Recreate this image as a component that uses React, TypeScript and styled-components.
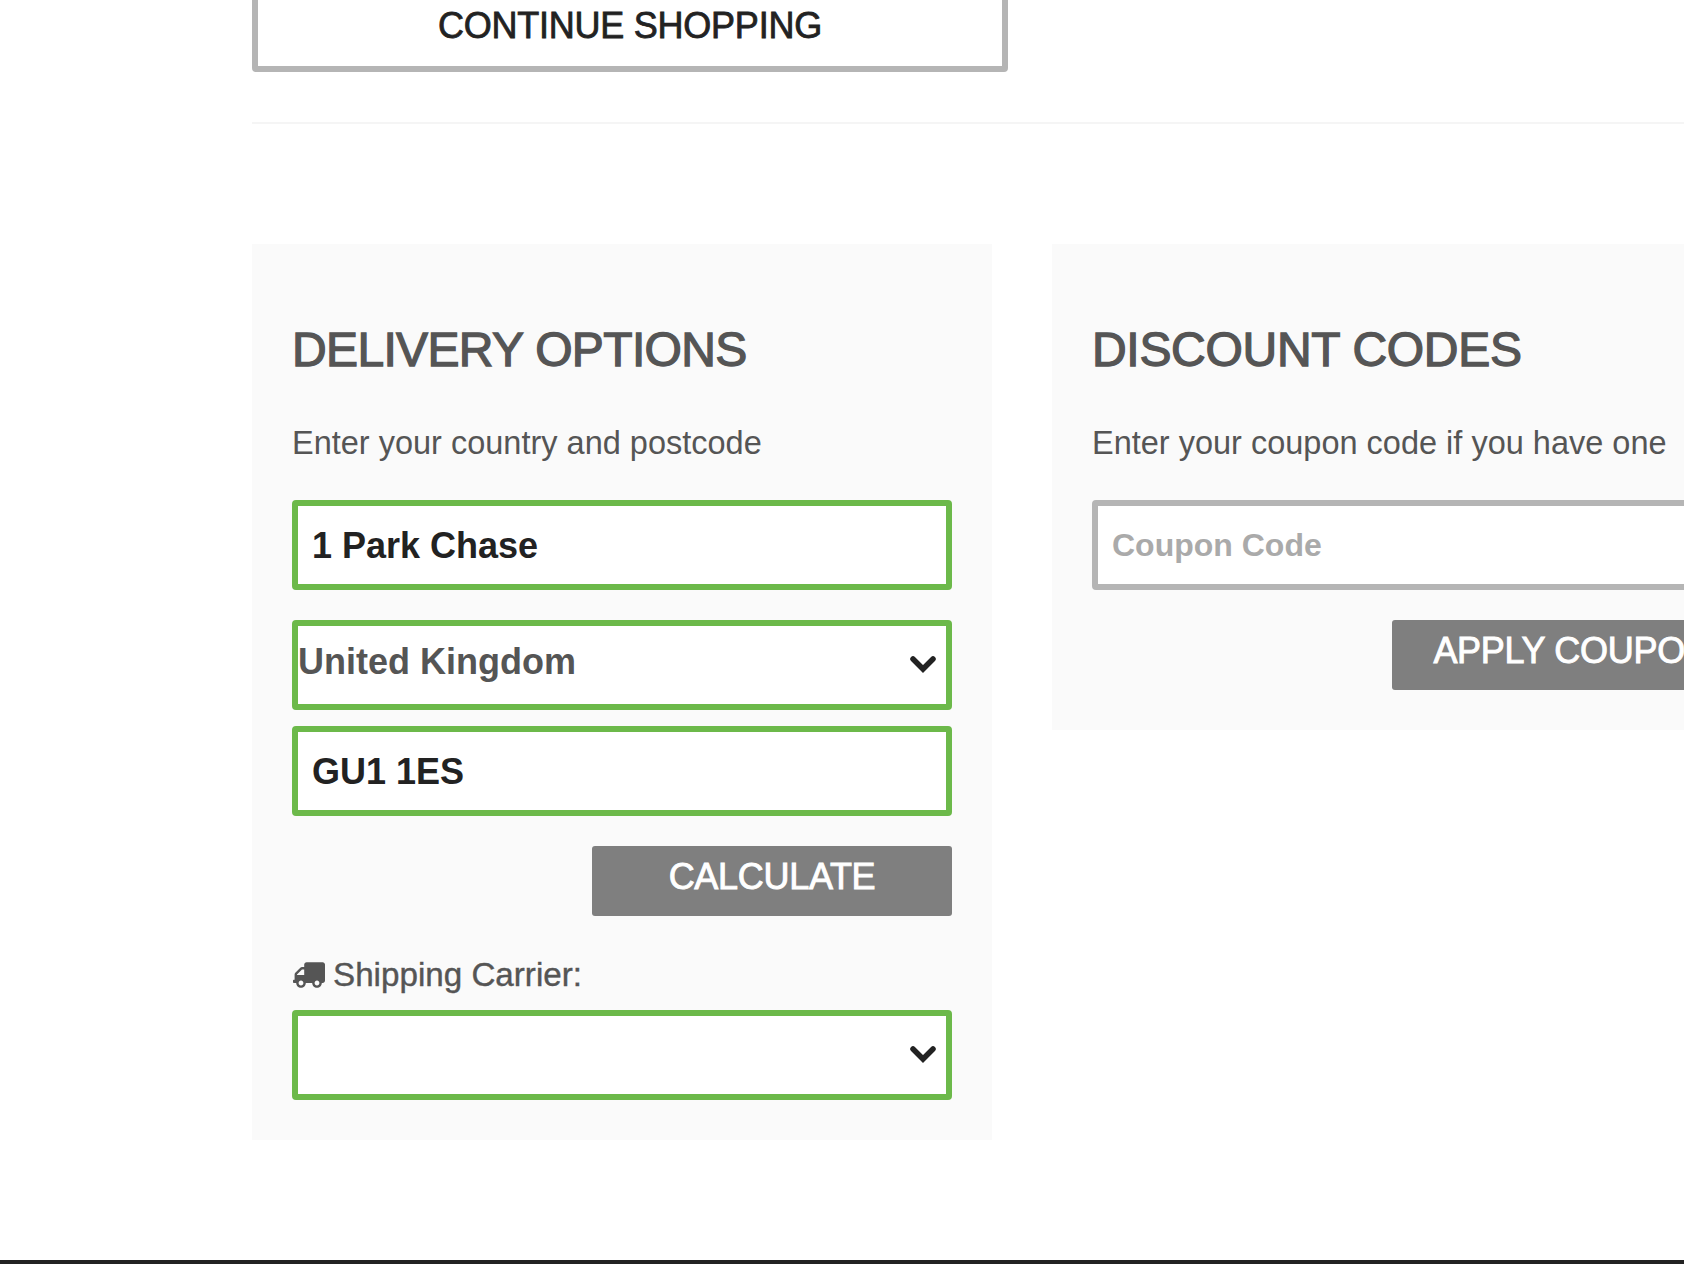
import styled, { createGlobalStyle } from "styled-components";
import { FaTruck } from "react-icons/fa";

const GlobalStyle = createGlobalStyle`
  html, body {
    margin: 0;
    padding: 0;
    height: 1264px;
    overflow: hidden;
    background: #fff;
    font-family: "Liberation Sans", Arial, sans-serif;
  }
  * {
    box-sizing: border-box;
  }
`;

const Page = styled.div`
  width: 1684px;
  height: 1264px;
  overflow: hidden;
`;

const Cart = styled.div`
  width: 1792px;
  margin-top: -22px;
  padding-left: 252px;
`;

const ContinueButton = styled.button`
  display: block;
  width: 756px;
  height: 94px;
  padding: 2px 0 0;
  background: #fff;
  border: 6px solid #b5b5b5;
  border-radius: 4px;
  color: #222;
  font: 400 36px "Liberation Sans", Arial, sans-serif;
  letter-spacing: -0.25px;
  -webkit-text-stroke: 0.8px #222;
`;

const Divider = styled.hr`
  height: 2px;
  margin: 50px 0 120px;
  border: 0;
  background: #f5f5f5;
`;

const Panels = styled.div`
  display: flex;
  align-items: flex-start;
  gap: 60px;
`;

const Panel = styled.section`
  flex: 0 0 740px;
  padding: 40px;
  background: #fafafa;
`;

const Title = styled.h2<{ $tracking: number }>`
  margin: 30px 0 0;
  color: #555;
  font-size: 48px;
  font-weight: 400;
  line-height: 72px;
  letter-spacing: ${(p) => p.$tracking}px;
  -webkit-text-stroke: 1.3px #555;
`;

const Hint = styled.p`
  margin: 33px 0 33px;
  color: #555;
  font-size: 32.5px;
  line-height: 48px;
`;

const Field = styled.input<{ $filled?: boolean; $gap?: number }>`
  display: block;
  width: 100%;
  height: 90px;
  margin-bottom: ${(p) => p.$gap ?? 30}px;
  padding: ${(p) => (p.$filled ? "2px" : "0")} 14px 0;
  background: #fff;
  border: 6px solid ${(p) => (p.$filled ? "#6cb94a" : "#b5b5b5")};
  border-radius: 4px;
  outline: none;
  color: #222;
  font: 700 ${(p) => (p.$filled ? 36 : 32)}px "Liberation Sans", Arial, sans-serif;

  &::placeholder {
    color: #aaa;
    opacity: 1;
  }
`;

const SelectWrap = styled.div<{ $gap?: number }>`
  position: relative;
  margin-bottom: ${(p) => p.$gap ?? 0}px;
`;

const Select = styled.select`
  display: block;
  width: 100%;
  height: 90px;
  padding: 0 0 8px 0;
  appearance: none;
  background: #fff;
  border: 6px solid #6cb94a;
  border-radius: 4px;
  outline: none;
  color: #555;
  font: 700 36px "Liberation Sans", Arial, sans-serif;
`;

const Chevron = styled.svg`
  position: absolute;
  top: 35px;
  right: 15px;
  width: 28px;
  height: 18px;
  filter: blur(0.4px);
  pointer-events: none;
`;

const Actions = styled.div`
  display: flex;
  justify-content: flex-end;
`;

const ActionButton = styled.button`
  width: 360px;
  height: 70px;
  padding: 0 0 8px;
  flex: none;
  background: #7f7f7f;
  border: 0;
  border-radius: 3px;
  color: #fff;
  font: 400 36px "Liberation Sans", Arial, sans-serif;
  letter-spacing: -0.3px;
  white-space: nowrap;
  -webkit-text-stroke: 0.9px #fff;
`;

const CarrierLabel = styled.label`
  display: flex;
  align-items: center;
  gap: 8px;
  margin: 35px 0 11px;
  color: #555;
  font-size: 33.2px;
  line-height: 48px;
  -webkit-text-stroke: 0.4px #555;

  svg {
    flex: none;
    width: 32px;
    height: 26px;
    margin-left: 1px;
    transform: scaleX(-1);
  }
`;

const Footer = styled.div`
  height: 40px;
  margin-top: 120px;
  background: #222;
`;

function SelectArrow() {
  return (
    <Chevron viewBox="0 0 28 18" fill="none">
      <path d="M4 4l10 10L24 4" stroke="#222" strokeWidth="5.5" strokeLinecap="round" strokeLinejoin="miter" />
    </Chevron>
  );
}

export default function App() {
  return (
    <Page>
      <GlobalStyle />
      <Cart>
        <ContinueButton>CONTINUE SHOPPING</ContinueButton>
        <Divider />
        <Panels>
          <Panel>
            <Title $tracking={-0.65}>DELIVERY OPTIONS</Title>
            <Hint>Enter your country and postcode</Hint>
            <Field $filled value="1 Park Chase" readOnly />
            <SelectWrap $gap={16}>
              <Select defaultValue="uk">
                <option value="uk">United Kingdom</option>
              </Select>
              <SelectArrow />
            </SelectWrap>
            <Field $filled value="GU1 1ES" readOnly />
            <Actions>
              <ActionButton>CALCULATE</ActionButton>
            </Actions>
            <CarrierLabel>
              <FaTruck />
              Shipping Carrier:
            </CarrierLabel>
            <SelectWrap>
              <Select defaultValue="">
                <option value=""></option>
              </Select>
              <SelectArrow />
            </SelectWrap>
          </Panel>
          <Panel>
            <Title $tracking={-0.3}>DISCOUNT CODES</Title>
            <Hint>Enter your coupon code if you have one</Hint>
            <Field placeholder="Coupon Code" />
            <Actions>
              <ActionButton>APPLY COUPON</ActionButton>
            </Actions>
          </Panel>
        </Panels>
      </Cart>
      <Footer />
    </Page>
  );
}
